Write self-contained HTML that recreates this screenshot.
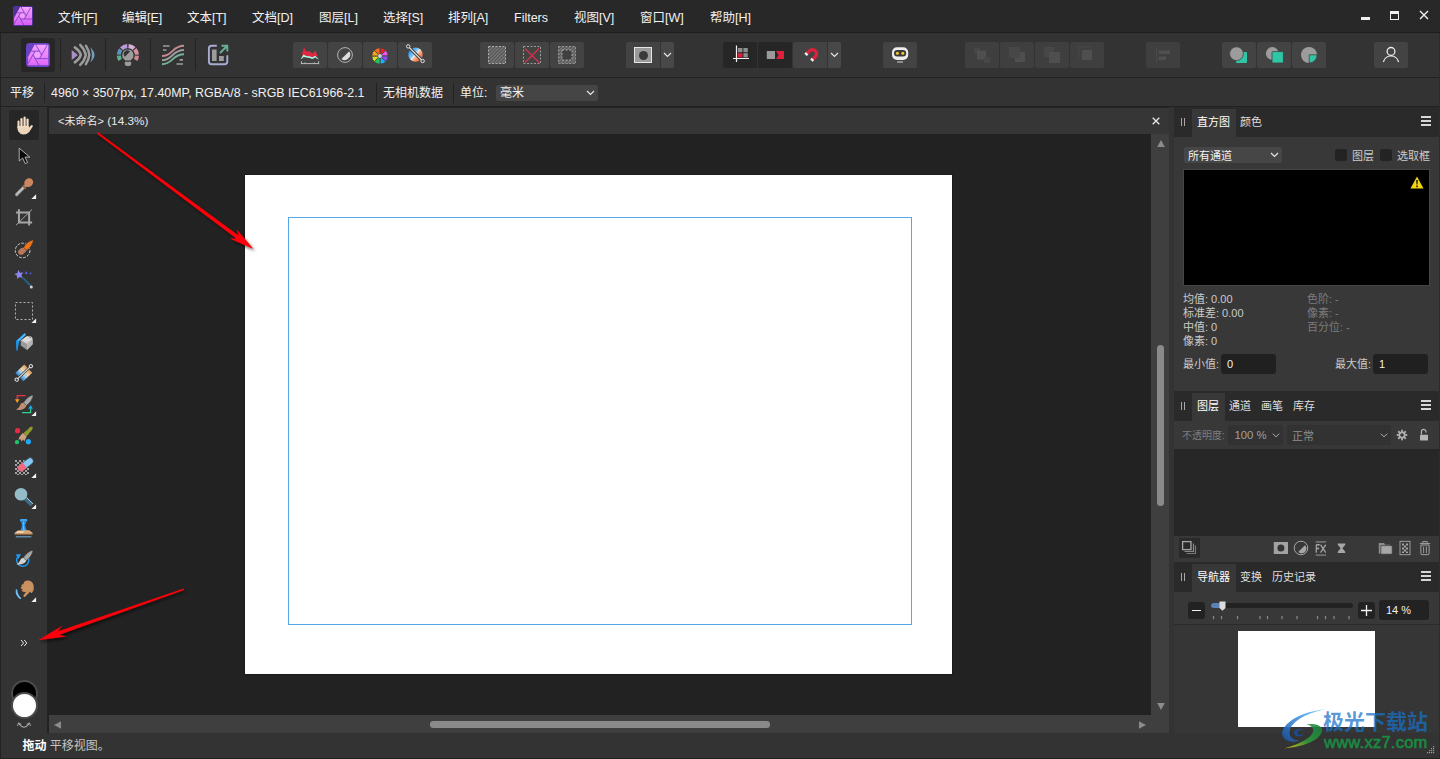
<!DOCTYPE html>
<html lang="zh-CN">
<head>
<meta charset="utf-8">
<title>Affinity Photo</title>
<style>
*{box-sizing:border-box;margin:0;padding:0}
html,body{width:1440px;height:759px;overflow:hidden;background:#222;}
body{position:relative;font-family:"Liberation Sans","Noto Sans CJK SC",sans-serif;font-size:12px;color:#e6e6e6;-webkit-font-smoothing:antialiased}
.abs{position:absolute}
#menubar{left:0;top:0;width:1440px;height:33px;background:#282828}
#menubar .mi{position:absolute;top:9px;height:18px;line-height:18px;font-size:12.5px;color:#f2f2f2;white-space:nowrap}
#toolbar{left:1px;top:33px;width:1439px;height:44px;background:#333}
.tb{position:absolute;top:9px;width:34px;height:26px;background:#434343;border-radius:2px}
.tb.dark{background:#262626}
.tb.dis{background:#3f3f3f}
.tb svg{position:absolute;left:0;top:0}
.vsep{position:absolute;width:1px;background:#222}
#ctxbar{left:1px;top:78px;width:1439px;height:28px;background:#333}
#ctxbar .t{position:absolute;top:6px;height:18px;line-height:18px;font-size:12px;color:#f0f0f0;white-space:nowrap}
#tools{left:1px;top:107px;width:46px;height:626px;background:#333}
#tools svg{position:absolute}
#doctab{left:49px;top:108px;width:1120px;height:26px;background:#363636}
#canvas{left:49px;top:134px;width:1102px;height:581px;background:#222}
#vscroll{left:1151px;top:134px;width:18px;height:581px;background:#3f3f3f}
#hscroll{left:49px;top:715px;width:1102px;height:18px;background:#3f3f3f}
#corner{left:1151px;top:715px;width:18px;height:18px;background:#3f3f3f}
#status{left:1px;top:733px;width:1439px;height:25px;background:#333}
#right{left:1174px;top:107px;width:266px;height:626px;background:#333}
#gap{left:1169px;top:107px;width:5px;height:626px;background:#333}
.ptabs{position:absolute;left:0;width:266px;height:28px;background:#2a2a2a}
.ptab{position:absolute;top:0;height:28px;line-height:26px;font-size:11px;color:#dedede;white-space:nowrap}
.hamb{width:10px;height:10px;border-top:2px solid #d6d6d6;border-bottom:2px solid #d6d6d6}
.hamb:after{content:"";position:absolute;left:0;top:2px;width:10px;height:2px;background:#d6d6d6}
.ptab.on{background:#383838;color:#fff}
.pbody{position:absolute;left:0;width:266px;background:#383838}
.lbl{position:absolute;font-size:11px;white-space:nowrap;line-height:14px;color:#cacaca}
.dim{color:#7c7c7c}
</style>
</head>
<body>
<!-- MENU BAR -->
<div id="menubar" class="abs">
  <svg class="abs" style="left:13px;top:6px" width="20" height="20" viewBox="0 0 20 20">
    <defs><linearGradient id="lg1" x1="0" y1="0" x2="0" y2="1"><stop offset="0" stop-color="#f5a6ff"/><stop offset="1" stop-color="#d65df5"/></linearGradient></defs>
    <rect width="20" height="20" rx="2" fill="#53309a"/>
    <g transform="scale(0.8333)">
    <path d="M8.6 1.200H22.800V22.800H1.200V14.300Z" fill="url(#lg1)"/>
    <circle cx="11.3" cy="11.9" r="2.900" fill="#f8b8ff" opacity="0.550"/>
    <path d="M9.800 1.200 15.630 11.900M21.460 1.800 13.470 15.650M22.800 15.650H9.130M12.970 22.800 6.970 11.900M1.400 21.500 9.130 8.150M5.200 8.150H13.470" stroke="#7a3cc0" stroke-width="0.950" fill="none"/>
    </g>
  </svg>
  <span class="mi" style="left:58px">文件[F]</span>
  <span class="mi" style="left:122px">编辑[E]</span>
  <span class="mi" style="left:187px">文本[T]</span>
  <span class="mi" style="left:252px">文档[D]</span>
  <span class="mi" style="left:319px">图层[L]</span>
  <span class="mi" style="left:383px">选择[S]</span>
  <span class="mi" style="left:448px">排列[A]</span>
  <span class="mi" style="left:514px">Filters</span>
  <span class="mi" style="left:574px">视图[V]</span>
  <span class="mi" style="left:640px">窗口[W]</span>
  <span class="mi" style="left:710px">帮助[H]</span>
  <div class="abs" style="left:1361px;top:16.600px;width:9px;height:3.200px;background:#f0f0f0"></div>
  <div class="abs" style="left:1390px;top:11px;width:9px;height:9px;border:1px solid #f0f0f0;border-top-width:3px"></div>
  <svg class="abs" style="left:1419px;top:10px" width="10" height="10" viewBox="0 0 10 10"><path d="M1 1 9 9M9 1 1 9" stroke="#f0f0f0" stroke-width="1.4"/></svg>
</div>
<div class="abs" style="left:0;top:32px;width:1440px;height:1px;background:#1d1d1d"></div>

<!-- TOOLBAR -->
<div id="toolbar" class="abs">
  <!-- persona buttons (coords relative to toolbar: left=1, top=33) -->
  <div class="abs" style="left:20px;top:5px;width:34px;height:34px;background:#262626;border-radius:3px"></div>
  <svg class="abs" style="left:25px;top:10px" width="24" height="24" viewBox="0 0 24 24">
    <defs><linearGradient id="lg2" x1="0" y1="0" x2="0" y2="1"><stop offset="0" stop-color="#f6a4ff"/><stop offset="1" stop-color="#e066f7"/></linearGradient></defs>
    <rect width="24" height="24" rx="3.5" fill="#6a42c4"/>
    <path d="M8.6 1.8H22.3V22.3H1.9V14.3Z" fill="url(#lg2)"/>
    <circle cx="11.3" cy="11.9" r="2.9" fill="#f8b8ff" opacity="0.55"/>
    <path d="M9.8 1.8 15.63 11.9M21.46 1.8 13.47 15.65M22.3 15.65H9.13M12.97 22.3 6.97 11.9M1.9 20.68 9.13 8.15M5.2 8.15H13.47" stroke="#7440c8" stroke-width="0.85" fill="none"/>
  </svg>
  <div class="vsep" style="left:59px;top:5px;height:33px"></div>
  <svg class="abs" style="left:69px;top:9px" width="26" height="26" viewBox="0 0 26 26">
    <path d="M1.7 8.1 7.9 12.9 1.7 18.1Z" fill="#a98fc6"/>
    <path d="M4.8 5.4Q9.6 8.6 10.9 12.9Q9.6 17.2 4.8 20.4M10.2 2.9Q14.8 7.6 15.8 12.9Q14.8 18.2 10.2 22.9M15.9 3.7Q18.9 8.4 19.3 12.9Q18.9 17.4 15.9 22.1" stroke="#9c9c9c" stroke-width="2.5" fill="none" stroke-linecap="round" stroke-linejoin="round"/>
    <path d="M20.3 5.2Q24.6 9.5 24.5 12.9Q24.6 16.3 20.3 20.6Q22 16.3 21.9 12.9Q22 9.5 20.3 5.200Z" fill="#6fa0bd"/>
  </svg>
  <div class="vsep" style="left:104px;top:5px;height:33px"></div>
  <svg class="abs" style="left:114px;top:9px" width="26" height="26" viewBox="0 0 26 26">
    <g fill="none" stroke-width="4.2">
      <path d="M5.27 17.87A9 9 0 0 1 3.91 13.57" stroke="#5fae8c"/>
      <path d="M3.91 12.63A9 9 0 0 1 5.81 7.56" stroke="#5b93b6"/>
      <path d="M6.54 6.74A9 9 0 0 1 12.27 4.12" stroke="#b79ad6"/>
      <path d="M13.53 4.12A9 9 0 0 1 19.04 6.52" stroke="#d9addb"/>
      <path d="M19.79 7.31A9 9 0 0 1 21.89 12.63" stroke="#d292a0"/>
      <path d="M21.89 13.57A9 9 0 0 1 20.53 17.87" stroke="#d08890"/>
    </g>
    <circle cx="12.9" cy="13.2" r="6.8" fill="#333"/>
    <path d="M12.9 7.6A5.6 5.6 0 0 1 15.8 18V18.400H10V18A5.6 5.6 0 0 1 12.9 7.600Z" fill="#9c9c9c"/>
    <path d="M9.9 14.7 15 9.500A3.6 3.6 0 0 0 9.9 14.700Z" fill="#333"/>
    <path d="M9.8 19.7H16.2V22Q16.2 24 14.200 24H11.800Q9.800 24 9.800 22Z" fill="#9c9c9c"/>
  </svg>
  <div class="vsep" style="left:149px;top:5px;height:33px"></div>
  <svg class="abs" style="left:160px;top:10px" width="24" height="24" viewBox="0 0 24 24">
    <g stroke="#9c9c9c" stroke-width="1.7" fill="none">
      <path d="M2 3H8.6M2 7H5.5M18.5 16.8H22M15.5 21H22"/>
      <path d="M1 17.2C12 17.2 11 7 23 7" stroke-width="1.9"/>
    </g>
    <path d="M1 13C12 13 11 2.8 23 2.8" stroke="#c58a92" stroke-width="1.900" fill="none"/>
    <path d="M1 21.3C12 21.3 11 11.2 23 11.2" stroke="#76b297" stroke-width="1.900" fill="none"/>
  </svg>
  <div class="vsep" style="left:194px;top:5px;height:33px"></div>
  <svg class="abs" style="left:205px;top:10px" width="24" height="24" viewBox="0 0 24 24">
    <path d="M10.800 2.800H5.600Q2.900 2.800 2.900 5.500V18.600Q2.900 21.300 5.600 21.300H18.600Q21.300 21.300 21.300 18.600V12.300" stroke="#a8acd2" stroke-width="1.9" fill="none"/>
    <rect x="6" y="6.5" width="4.6" height="11.5" fill="#9c9c9c"/>
    <rect x="13" y="13" width="4.8" height="5" fill="#9c9c9c"/>
    <path d="M14 10 21 3M15.5 2.8H21.3V8.6" stroke="#6aae98" stroke-width="1.900" fill="none"/>
  </svg>

  <!-- group 2 -->
  <div class="tb" style="left:292px"></div>
  <div class="tb" style="left:327px"></div>
  <div class="tb" style="left:362px"></div>
  <div class="tb" style="left:397px"></div>
  <svg class="abs" style="left:299px;top:13px" width="20" height="19" viewBox="0 0 20 19">
    <path d="M1.800 10 2.500 6.300 4.150 1.100 5.800 4.900 8.200 5.800 9.600 5.100 12.400 7.700 14.300 5.800 15.500 4.600 17.100 9.100 18.100 10.800 15.200 9.800 12.400 11.200 9.600 10.300 6.300 10 3.400 8.600Z" fill="#e0283f"/>
    <path d="M1.100 12.600 3.400 8.600 6.300 10 9.600 10.300 12.400 11.200 15.200 9.800 18.550 12.900V13.400L15.200 11.600 12.400 13 9.600 12 3.700 11.100 1.100 13.300Z" fill="#b8f2e0"/>
    <path d="M1.100 17.600H19" stroke="#d4d4d4" stroke-width="0.800"/>
    <path d="M1.450 15.200V17.900M18.650 15.200V17.900" stroke="#d4d4d4" stroke-width="0.800"/>
    <path d="M5.100 16.300V17.600M14.300 16.300V17.600" stroke="#d4d4d4" stroke-width="0.700"/>
  </svg>
  <svg class="abs" style="left:335px;top:13px" width="18" height="18" viewBox="0 0 18 18">
    <circle cx="9" cy="9" r="7.400" fill="none" stroke="#b4b4b4" stroke-width="1"/>
    <path d="M13.200 5.200A5.600 5.600 0 0 1 5.400 13Z" fill="#dcdcdc"/>
  </svg>
  <svg class="abs" style="left:370px;top:13.500px" width="18" height="18" viewBox="-9 -9 18 18">
    <g stroke="#404040" stroke-width="0.8">
      <path d="M0 0 0-8.2A8.2 8.2 0 0 1 5.8-5.8Z" fill="#e8202a"/>
      <path d="M0 0 5.8-5.8A8.2 8.2 0 0 1 8.2 0Z" fill="#ee55e8"/>
      <path d="M0 0 8.2 0A8.2 8.2 0 0 1 5.8 5.8Z" fill="#8a4cf0"/>
      <path d="M0 0 5.8 5.8A8.2 8.2 0 0 1 0 8.2Z" fill="#20b0f4"/>
      <path d="M0 0 0 8.2A8.2 8.2 0 0 1-5.8 5.8Z" fill="#22c35e"/>
      <path d="M0 0-5.8 5.8A8.2 8.2 0 0 1-8.2 0Z" fill="#d5dd28"/>
      <path d="M0 0-8.2 0A8.2 8.2 0 0 1-5.8-5.8Z" fill="#f7a01c"/>
      <path d="M0 0-5.8-5.8A8.2 8.2 0 0 1 0-8.2Z" fill="#f36b1d"/>
    </g>
    <circle r="2.3" fill="#d6d6d6" stroke="#404040" stroke-width="0.6"/>
  </svg>
  <svg class="abs" style="left:402.500px;top:10.300px" width="22" height="22" viewBox="0 0 22 22">
    <defs><linearGradient id="lg3" x1="0.15" y1="0.2" x2="0.85" y2="0.8"><stop offset="0" stop-color="#1e9af0"/><stop offset="0.42" stop-color="#9ccdf2"/><stop offset="0.5" stop-color="#f4f0ee"/><stop offset="0.6" stop-color="#f3b79b"/><stop offset="1" stop-color="#ee6a28"/></linearGradient></defs>
    <circle cx="11.5" cy="11.6" r="7.2" fill="url(#lg3)"/>
    <path d="M5.2 4.4 18 17.4" stroke="#404040" stroke-width="3.2"/>
    <path d="M5.2 4.4 18 17.4" stroke="#e8e8e8" stroke-width="1.2"/>
    <circle cx="4.2" cy="3.4" r="1.7" fill="#404040" stroke="#e8e8e8" stroke-width="1"/>
    <circle cx="18.6" cy="18" r="1.7" fill="#404040" stroke="#e8e8e8" stroke-width="1"/>
  </svg>

  <!-- group 3 -->
  <div class="tb" style="left:479px"></div>
  <div class="tb" style="left:514px"></div>
  <div class="tb" style="left:549px"></div>
  <svg class="abs" style="left:486px;top:12px" width="20" height="20" viewBox="0 0 20 20">
    <defs><pattern id="hat" width="2.5" height="2.5" patternUnits="userSpaceOnUse" patternTransform="rotate(-45)"><rect width="2.5" height="1.1" fill="#7d7d7d"/></pattern></defs>
    <rect x="1.5" y="1.5" width="17" height="17" fill="#565656"/>
    <rect x="1.5" y="1.5" width="17" height="17" fill="url(#hat)"/>
    <rect x="1.5" y="1.5" width="17" height="17" fill="none" stroke="#d0d0d0" stroke-width="0.700" stroke-dasharray="2 1.500"/>
  </svg>
  <svg class="abs" style="left:521px;top:12px" width="20" height="20" viewBox="0 0 20 20">
    <rect x="1.5" y="1.5" width="17" height="17" fill="none" stroke="#c4c4c4" stroke-width="0.700" stroke-dasharray="2 1.500"/>
    <path d="M3 3.5 17 17.5M17 3.5 3 17.5" stroke="#d6304a" stroke-width="1.3"/>
  </svg>
  <svg class="abs" style="left:556px;top:12px" width="20" height="20" viewBox="0 0 20 20">
    <rect x="1.5" y="1.5" width="17" height="17" fill="#565656"/>
    <rect x="1.5" y="1.5" width="17" height="17" fill="url(#hat)"/>
    <rect x="5" y="5" width="10" height="10" fill="#404040"/>
    <rect x="1.5" y="1.5" width="17" height="17" fill="none" stroke="#b0b0b0" stroke-width="0.700" stroke-dasharray="2 1.500"/>
    <rect x="5" y="5" width="10" height="10" fill="none" stroke="#d0d0d0" stroke-width="0.700" stroke-dasharray="2 1.500"/>
  </svg>

  <!-- group 4 -->
  <div class="tb" style="left:625px;border-radius:2px 0 0 2px"></div>
  <div class="tb" style="left:660px;width:13px;border-radius:0 2px 2px 0;background:#484848"></div>
  <div class="abs" style="left:633px;top:14px;width:18px;height:16px;background:#9a9a9a;border:1.5px solid #e6e6e6"></div>
  <div class="abs" style="left:637.5px;top:17.5px;width:9px;height:9px;border-radius:50%;background:#3a3a3a"></div>
  <svg class="abs" style="left:662px;top:19px" width="9" height="6" viewBox="0 0 9 6"><path d="M1 1 4.5 4.4 8 1" stroke="#e6e6e6" stroke-width="1.2" fill="none"/></svg>

  <!-- group 5 -->
  <div class="tb dark" style="left:722px"></div>
  <div class="tb dark" style="left:757px"></div>
  <div class="tb" style="left:792px;border-radius:2px 0 0 2px"></div>
  <div class="tb" style="left:827px;width:13px;border-radius:0 2px 2px 0;background:#484848"></div>
  <svg class="abs" style="left:730px;top:11px" width="20" height="20" viewBox="0 0 20 20">
    <path d="M5.5 1.5V18M2 14.5H18" stroke="#f0f0f0" stroke-width="1.2"/>
    <rect x="7" y="4" width="4.4" height="4.2" fill="#8e8e8e"/><rect x="12.4" y="4" width="4.4" height="4.2" fill="#8e8e8e"/>
    <rect x="7" y="9.2" width="4.4" height="4.2" fill="#e0203c"/><rect x="12.4" y="9.2" width="4.4" height="4.2" fill="#8e8e8e"/>
  </svg>
  <svg class="abs" style="left:764px;top:16px" width="20" height="12" viewBox="0 0 20 12">
    <rect x="1.8" y="2" width="8.2" height="8" fill="#9a9a9a"/>
    <path d="M11 2H19V10H11L13.6 6Z" fill="#e0203c"/>
  </svg>
  <svg class="abs" style="left:799px;top:11px" width="22" height="22" viewBox="0 0 22 22">
    <g transform="translate(12 10.200) rotate(45)">
      <path d="M-4.100 4.200V-0.600A4.100 4.100 0 0 1 4.100 -0.600V4.200" stroke="#e0203c" stroke-width="3.300" fill="none"/>
      <rect x="-5.750" y="2.700" width="3.300" height="2.300" fill="#eee"/><rect x="2.450" y="2.700" width="3.300" height="2.300" fill="#eee"/>
    </g>
  </svg>
  <svg class="abs" style="left:829px;top:19px" width="9" height="6" viewBox="0 0 9 6"><path d="M1 1 4.5 4.4 8 1" stroke="#e6e6e6" stroke-width="1.2" fill="none"/></svg>

  <!-- group 6 assistant -->
  <div class="tb" style="left:882px"></div>
  <svg class="abs" style="left:889px;top:12px" width="20" height="20" viewBox="0 0 20 20">
    <rect x="2" y="2.2" width="16.2" height="12.8" rx="5" fill="#ececec"/>
    <rect x="4" y="5" width="12.2" height="6.4" rx="3.2" fill="#3a3a3a"/>
    <circle cx="7.4" cy="8.2" r="1.5" fill="#f0c832"/><circle cx="12.8" cy="8.2" r="1.5" fill="#f0c832"/>
    <rect x="7.2" y="16.2" width="5.8" height="1.6" fill="#a0a0a0"/>
  </svg>

  <!-- group 7 disabled -->
  <div class="tb dis" style="left:964px"></div>
  <div class="tb dis" style="left:999px"></div>
  <div class="tb dis" style="left:1034px"></div>
  <div class="tb dis" style="left:1069px"></div>
  <svg class="abs" style="left:964px;top:9px" width="140" height="26" viewBox="0 0 140 26">
    <g fill="#474747">
      <rect x="9" y="5.5" width="6" height="6"/><rect x="12" y="8.5" width="9" height="9" fill="#4f4f4f"/><rect x="19" y="15" width="6" height="6"/>
      <rect x="50" y="10" width="10" height="10" fill="#4f4f4f"/><rect x="44" y="5" width="11" height="11"/>
      <rect x="79" y="5" width="10" height="10"/><rect x="84" y="10" width="11" height="11" fill="#4f4f4f"/>
      <rect x="114" y="5" width="10" height="10" fill="none" stroke="#484848" /><rect x="117" y="8" width="10" height="10" fill="#4f4f4f"/>
    </g>
  </svg>
  <div class="tb dis" style="left:1145px"></div>
  <svg class="abs" style="left:1145px;top:9px" width="34" height="26" viewBox="0 0 34 26"><path d="M10.5 5V21" stroke="#4a4a4a" stroke-width="1"/><rect x="12.5" y="8.5" width="11.5" height="3.6" fill="#4f4f4f"/><rect x="12.5" y="14.5" width="7.5" height="3.6" fill="#4f4f4f"/></svg>

  <!-- group 9 -->
  <div class="tb" style="left:1221px"></div>
  <div class="tb" style="left:1256px"></div>
  <div class="tb" style="left:1291px"></div>
  <svg class="abs" style="left:1221px;top:9px" width="105" height="26" viewBox="0 0 105 26">
    <rect x="14" y="10" width="11" height="11" rx="1" fill="#2fc6a6"/><circle cx="14.500" cy="11.700" r="6.900" fill="#9c9c9c" stroke="#434343" stroke-width="0.800"/>
    <circle cx="50.300" cy="11.500" r="6.400" fill="#9c9c9c"/><rect x="50" y="9.6" width="11.4" height="11.4" rx="1" fill="#2fc6a6" stroke="#404040" stroke-width="0.8"/>
    <circle cx="87" cy="13" r="8" fill="#9c9c9c"/><path d="M87.200 12.800H95A8 8 0 0 1 87.200 21Z" fill="#2fc6a6" stroke="#434343" stroke-width="0.800"/>
  </svg>

  <!-- account -->
  <div class="tb" style="left:1373px"></div>
  <svg class="abs" style="left:1380px;top:12px" width="20" height="20" viewBox="0 0 20 20">
    <circle cx="10" cy="6.4" r="3.9" fill="none" stroke="#ececec" stroke-width="1.3"/>
    <path d="M2.4 17A7.8 7.8 0 0 1 17.6 17" fill="none" stroke="#ececec" stroke-width="1.3"/>
  </svg>
</div>

<!-- CONTEXT BAR -->
<div id="ctxbar" class="abs">
  <span class="t" style="left:9px">平移</span>
  <div class="vsep" style="left:43px;top:5px;height:20px"></div>
  <span class="t" id="docinfo" style="left:50px;font-size:12.4px">4960 × 3507px, 17.40MP, RGBA/8 - sRGB IEC61966-2.1</span>
  <div class="vsep" style="left:375px;top:5px;height:20px"></div>
  <span class="t" style="left:382px">无相机数据</span>
  <div class="vsep" style="left:452px;top:5px;height:20px"></div>
  <span class="t" style="left:459px">单位:</span>
  <div class="abs" style="left:495px;top:7px;width:102px;height:16px;background:#454545;border-radius:2px"></div>
  <span class="t" style="left:499px">毫米</span>
  <svg class="abs" style="left:585px;top:12px" width="9" height="6" viewBox="0 0 9 6"><path d="M1 1 4.5 4.4 8 1" stroke="#e6e6e6" stroke-width="1.2" fill="none"/></svg>
</div>

<!-- LEFT TOOLS -->
<div id="tools" class="abs">
  <!-- coords relative to left=1, top=107 -->
  <div class="abs" style="left:8px;top:3px;width:30px;height:30px;background:#262626;border-radius:3px"></div>
  <!-- hand -->
  <svg style="left:15.500px;top:8.500px" width="17" height="20" viewBox="0 0 17 20">
    <path d="M0.500 10H11.650V11.800L13.900 9.400Q15 8.500 15.700 9.400Q16.100 10.200 15.300 11.300L12 16.200Q9.800 18.600 6.500 18.600Q3 18.400 1.300 15.600Q0.500 14 0.500 12Z" fill="#ecd5bb"/>
    <rect x="0.500" y="4.400" width="2.050" height="8" rx="1" fill="#f4dec6"/>
    <rect x="3.400" y="2.100" width="2.200" height="10" rx="1.100" fill="#f4dec6"/>
    <rect x="6.500" y="0.500" width="2.200" height="11" rx="1.100" fill="#f4dec6"/>
    <rect x="9.450" y="2.500" width="2.200" height="10" rx="1.100" fill="#f4dec6"/>
  </svg>
  <!-- move arrow -->
  <svg style="left:17px;top:40px" width="13" height="18" viewBox="0 0 13 18">
    <path d="M1.200 1.200V14L4.600 11 7.200 16.600 9.600 15.500 7 10.100H11.800Z" fill="#0a0a0a" stroke="#bdbdbd" stroke-width="0.900" stroke-linejoin="round"/>
  </svg>
  <!-- colour picker -->
  <svg style="left:13px;top:70px" width="24" height="24" viewBox="0 0 24 24">
    <path d="M2.600 17.600 10.800 9.400" stroke="#a8a8a8" stroke-width="3" stroke-linecap="round"/>
    <path d="M3 16.600 10.200 9.400" stroke="#d6d6d6" stroke-width="1" stroke-linecap="round"/>
    <path d="M9.300 7.600 12.600 10.900 11.300 12.200 8 8.900Z" fill="#9a5a3a"/>
    <ellipse cx="14.700" cy="5.600" rx="4.700" ry="4.100" transform="rotate(-42 14.700 5.600)" fill="#cd8760"/>
    <path d="M22.100 17.200V22H17.400Z" fill="#f2f2f2"/>
  </svg>
  <!-- crop -->
  <svg style="left:15px;top:102px" width="17" height="17" viewBox="0 0 17 17">
    <path d="M2.950 0.200V13.600H16.100M0 3.450H13.100V16.500" stroke="#a6a6a6" stroke-width="2" fill="none"/>
    <path d="M0 16.200 16.100 0.400" stroke="#a6a6a6" stroke-width="1"/>
  </svg>
  <!-- selection brush -->
  <svg style="left:13px;top:131px" width="22" height="22" viewBox="0 0 22 22">
    <circle cx="8.600" cy="12.500" r="7.300" fill="none" stroke="#dcdcdc" stroke-width="1" stroke-dasharray="2.600 1.500"/>
    <path d="M9.600 9.400Q13 3.600 18.500 2.100Q19.700 2 19.300 3.300Q17.600 9 12.900 12.500Z" fill="#f0741c" stroke="#333" stroke-width="0.600"/>
    <ellipse cx="7.800" cy="13.300" rx="3.900" ry="3" transform="rotate(-38 7.800 13.300)" fill="#b8775a"/>
    <path d="M9.300 9.600 12.700 12.700 11 14 8 11Z" fill="#b8775a"/>
  </svg>
  <!-- magic wand -->
  <svg style="left:13px;top:161px" width="22" height="22" viewBox="0 0 22 22">
    <path d="M8.600 10 17.200 18.800" stroke="#1f5068" stroke-width="2.300" stroke-linecap="round"/>
    <path d="M9.400 9.900 17 17.600" stroke="#4d8aa6" stroke-width="0.600"/>
    <circle cx="17.300" cy="18.900" r="1.500" fill="#d4d4d4"/>
    <path d="M4.27 1.97 6.11 4.63 9.34 4.45 7.38 7.02 8.55 10.03 5.50 8.97 3.00 11.01 3.07 7.78 0.35 6.03 3.45 5.10Z" fill="#8a86f2"/>
    <path d="M12.20 3.10 12.77 4.43 14.10 5.00 12.77 5.57 12.20 6.90 11.63 5.57 10.30 5.00 11.63 4.43Z" fill="#5a6cf0"/>
    <path d="M16.60 4.00 17.02 4.98 18.00 5.40 17.02 5.82 16.60 6.80 16.18 5.82 15.20 5.40 16.18 4.98Z" fill="#5a6cf0"/>
  </svg>
  <!-- marquee -->
  <svg style="left:13px;top:194px" width="24" height="24" viewBox="0 0 24 24">
    <rect x="1.500" y="1.500" width="17" height="17" fill="none" stroke="#b4b4b4" stroke-width="1" stroke-dasharray="2 2"/>
    <path d="M22.100 17.400V22.100H17.400Z" fill="#f2f2f2"/>
  </svg>
  <!-- flood fill -->
  <svg style="left:13px;top:224px" width="22" height="22" viewBox="0 0 22 22">
    <path d="M6.700 9.500 13 13.300 18.700 8.200V13.300L13 19 6.700 14.500Z" fill="#9a9a9a"/>
    <path d="M13 13.300 18.700 8.200V13.300L13 19Z" fill="#b4b4b4"/>
    <path d="M6.700 9.500 13 5 18.700 8.200 13 13.300Z" fill="#d2d2d2"/>
    <ellipse cx="14.300" cy="7.600" rx="3.900" ry="1.600" fill="none" stroke="#ececec" stroke-width="0.900" transform="rotate(-10 14.300 7.600)"/>
    <path d="M10.600 2.200 12 3.800 5.200 10.200 4.800 12.400 3.400 19.800 2.300 19.600 2 9.800Z" fill="#1e95ea"/>
    <path d="M10.600 2.200 12 3.800 5.200 10.200 3.600 9.300Z" fill="#4db4f4"/>
  </svg>
  <!-- gradient -->
  <svg style="left:13px;top:255px" width="22" height="22" viewBox="0 0 22 22">
    <defs><linearGradient id="gg" x1="0" y1="0" x2="1" y2="0"><stop offset="0" stop-color="#2683cc"/><stop offset="1" stop-color="#cfe6f2"/></linearGradient>
    <linearGradient id="gg2" x1="0" y1="0" x2="1" y2="0"><stop offset="0" stop-color="#f2e6c4"/><stop offset="1" stop-color="#d89c62"/></linearGradient></defs>
    <g transform="translate(9.800 10.900) rotate(-43.500)">
      <rect x="-6.200" y="-5.800" width="6.200" height="4.600" fill="url(#gg)"/><rect x="0" y="-5.800" width="6.200" height="4.600" fill="url(#gg2)"/>
      <rect x="-6.200" y="1.200" width="6.200" height="4.600" fill="url(#gg)"/><rect x="0" y="1.200" width="6.200" height="4.600" fill="url(#gg2)"/>
      <path d="M-8.700 0H8.700" stroke="#e4e4e4" stroke-width="1.100"/>
      <circle cx="-9.800" cy="0" r="1.600" fill="#333" stroke="#e4e4e4" stroke-width="1"/>
      <circle cx="9.800" cy="0" r="1.600" fill="#333" stroke="#e4e4e4" stroke-width="1"/>
    </g>
  </svg>
  <!-- paint brush with arrows -->
  <svg style="left:13px;top:286px" width="24" height="25" viewBox="0 0 24 25">
    <path d="M11.500 2.600H3.200V7" stroke="#e5324d" stroke-width="1.300" fill="none"/>
    <path d="M0.900 6.200 3.200 10 5.500 6.200Z" fill="#f0a01e"/>
    <path d="M8 19.700H16.600V15.500" stroke="#2fd08c" stroke-width="1.300" fill="none"/>
    <path d="M14.200 15.800 16.600 12 19 15.800Z" fill="#1fa6f0"/>
    <path d="M9.500 9.600Q13.500 3.400 17.900 2.200Q19.300 2 19 3.500Q17.700 8.800 12.400 12.600Z" fill="#a6a6a6" stroke="#333" stroke-width="0.500"/>
    <path d="M9.300 9.600 12.400 12.600Q11.200 16.600 6.200 16.900Q2.600 17.100 2.200 16.200Q5 15.400 5.600 13Q6.500 10 9.300 9.600Z" fill="#c08e70"/>
    <path d="M22.100 18.600V23.100H17.400Z" fill="#f2f2f2"/>
  </svg>
  <!-- colour replacement brush -->
  <svg style="left:13px;top:318px" width="22" height="22" viewBox="0 0 22 22">
    <circle cx="3.600" cy="5.700" r="2.600" fill="#e82a44"/>
    <circle cx="3" cy="17.100" r="2.200" fill="#20c46a"/>
    <circle cx="14.400" cy="16.700" r="2.600" fill="#20a8f4"/>
    <path d="M9.200 8.400Q11.600 5.600 13.400 5Q14.800 2.200 17.400 1.500Q19.200 1.600 18.700 3.600Q17.800 6 15.700 7.200Q14.800 9.600 12.300 11.400Z" fill="#8c9a30"/>
    <path d="M8.800 8 12.600 11.600 10.400 16.200 9 14.400 7.800 16.600 6.400 14.200 4.400 14.800 5.600 11.600Z" fill="#cda080"/>
  </svg>
  <!-- erase -->
  <svg style="left:13px;top:348px" width="24" height="24" viewBox="0 0 24 24">
    <defs><pattern id="chk" width="4" height="4" patternUnits="userSpaceOnUse" x="1" y="5"><rect width="4" height="4" fill="#333"/><rect width="2" height="2" fill="#a4a4a4"/><rect x="2" y="2" width="2" height="2" fill="#a4a4a4"/></pattern></defs>
    <rect x="1" y="5" width="14" height="15" fill="url(#chk)"/>
    <g transform="rotate(-38 11.500 9.500)">
      <rect x="2.500" y="6.300" width="18" height="6.600" rx="3.300" fill="#86c8f4" stroke="#333" stroke-width="0.600"/>
      <path d="M5.800 6.300H10.600V12.900H5.800A3.300 3.300 0 0 1 5.800 6.300Z" fill="#ee6a80"/>
    </g>
    <path d="M22.100 18.300V23.100H17.400Z" fill="#f2f2f2"/>
  </svg>
  <!-- zoom/dodge -->
  <svg style="left:12px;top:379px" width="24" height="24" viewBox="0 0 24 24">
    <path d="M12 12 19 19" stroke="#3f6c88" stroke-width="4.200" stroke-linecap="butt"/>
    <path d="M13.600 11.600 20 18" stroke="#a8c0cc" stroke-width="1"/>
    <circle cx="8" cy="8.200" r="6.300" fill="#94bcc6"/>
    <path d="M23.100 18.600V23H18.400Z" fill="#f2f2f2"/>
  </svg>
  <!-- clone stamp -->
  <svg style="left:12px;top:411px" width="22" height="22" viewBox="0 0 22 22">
    <path d="M7 1.800Q7 1 7.800 1H13.400Q14.200 1 14.200 1.800V3.400H7Z" fill="#3aa8f2"/>
    <path d="M8 3.400H13.200L12.200 7.500 13.600 12.400H7.600L9 7.500Z" fill="#2a90e6"/>
    <path d="M10 3.400H11.400L10.800 7.500 11.600 12.400H10Z" fill="#5cc0f8"/>
    <path d="M5 12.400H16.200L19.600 15H1.600Z" fill="#ecd0aa"/>
    <path d="M10.600 12.400H16.200L19.600 15H10.600Z" fill="#d6a878"/>
    <rect x="1.600" y="15" width="18" height="1.500" fill="#c8965e"/>
    <rect x="2.800" y="18" width="15.600" height="1.500" fill="#5e8aa6"/>
  </svg>
  <!-- undo brush -->
  <svg style="left:13px;top:441px" width="22" height="24" viewBox="0 0 22 24">
    <path d="M3.800 8.600A6.100 6.100 0 1 0 13.400 8.200" fill="none" stroke="#1e9af0" stroke-width="1.400"/>
    <path d="M1.600 6.400 7 6 4.600 11Z" fill="#1e9af0"/>
    <path d="M9.300 9.600Q13.400 3.600 17.800 2.400Q19.200 2.300 18.800 3.800Q17.400 8.800 12.300 12.700Z" fill="#a6a6a6" stroke="#333" stroke-width="0.500"/>
    <path d="M9.100 9.700 12.300 12.700Q11 15.600 7 16.200Q3.600 16.800 2.600 16.300Q5.200 15 5.800 13Q6.800 10.200 9.100 9.700Z" fill="#d4d4d4"/>
  </svg>
  <!-- smudge -->
  <svg style="left:13px;top:472px" width="24" height="24" viewBox="0 0 24 24">
    <path d="M1.800 10.200Q0.800 17.200 6.800 20.200Q7.600 19.600 7 18.800Q3.600 16 3.200 10.400Z" fill="#6fc0f4"/>
    <path d="M12.500 1.600Q18.500 1.200 19.800 7Q20.300 11 18.200 13.600Q17.400 14.600 16.800 13.600L16.200 12.600Q14 15 11.500 17.600Q10.400 18.400 9.600 17.400Q9 16.500 10 15.500L12 13.200 8.400 12.400Q7.400 12 7.800 11T9.200 10.200L7.400 9.800Q6.400 9.400 6.800 8.400T8.300 7.800L7.800 7.400Q7 6.600 7.600 5.800T9.200 5.400Q9.600 2.400 12.500 1.600Z" fill="#c7925f"/>
    <path d="M22.100 18.200V23H17.400Z" fill="#f2f2f2"/>
  </svg>
  <!-- chevrons -->
  <svg style="left:19px;top:532px" width="8" height="8" viewBox="0 0 8 8"><path d="M1 1 3.600 4 1 7M4.200 1 6.800 4 4.200 7" stroke="#e8e8e8" stroke-width="1" fill="none"/></svg>
  <!-- colour wells -->
  <div class="abs" style="left:9.600px;top:573.300px;width:27.200px;height:27.200px;border-radius:50%;background:#000;border:2px solid #4c4c4c"></div>
  <div class="abs" style="left:9.600px;top:584.600px;width:27.200px;height:27.200px;border-radius:50%;background:#fff;border:2px solid #4c4c4c"></div>
  <svg style="left:15.600px;top:614.500px" width="14" height="8" viewBox="0 0 14 8"><path d="M2 2Q7 8.500 12 2" stroke="#b0b0b0" stroke-width="1.100" fill="none"/><path d="M0.500 3.800 1.600 0.800 4.400 2.500M13.500 3.800 12.400 0.800 9.600 2.500" stroke="#b0b0b0" stroke-width="1" fill="none"/></svg>
</div>

<!-- DOC TAB -->
<div id="doctab" class="abs">
  <span class="abs" id="tabtitle" style="left:9px;top:5px;line-height:16px;font-size:11px;color:#e8e8e8;white-space:nowrap">&lt;未命名&gt;<span style="font-size:11.800px"> (14.3%)</span></span>
  <svg class="abs" style="left:1102.600px;top:9px" width="8" height="8" viewBox="0 0 8 8"><path d="M0.700 0.700 7.300 7.300M7.300 0.700 0.700 7.300" stroke="#e8e8e8" stroke-width="1.300"/></svg>
</div>

<!-- CANVAS -->
<div id="canvas" class="abs">
  <div class="abs" style="left:196px;top:41px;width:707px;height:499px;background:#fff;box-shadow:0 0 0 1px #1a1a1a"></div>
  <div class="abs" style="left:238.800px;top:82.600px;width:623.900px;height:408.300px;border:1px solid #56a6e8"></div>
</div>
<div id="vscroll" class="abs">
  <svg class="abs" style="left:5.700px;top:6px" width="8" height="7" viewBox="0 0 8 7"><path d="M4 0 7.800 7H0.200Z" fill="#8c8c8c"/></svg>
  <div class="abs" style="left:6px;top:211px;width:7px;height:161px;border-radius:3.500px;background:#8a8a8a"></div>
  <svg class="abs" style="left:5.500px;top:569px" width="8" height="7" viewBox="0 0 8 7"><path d="M4 7 7.800 0H0.200Z" fill="#8c8c8c"/></svg>
</div>
<div id="hscroll" class="abs">
  <svg class="abs" style="left:5px;top:5.600px" width="7" height="8" viewBox="0 0 7 8"><path d="M0 4 7 0.200V7.800Z" fill="#8c8c8c"/></svg>
  <div class="abs" style="left:381px;top:6.300px;width:339.500px;height:6.400px;border-radius:3.200px;background:#8a8a8a"></div>
  <svg class="abs" style="left:1090px;top:5.600px" width="7" height="8" viewBox="0 0 7 8"><path d="M7 4 0 0.200V7.800Z" fill="#8c8c8c"/></svg>
</div>
<div id="corner" class="abs"></div>
<div id="gap" class="abs"></div>
<div class="abs" style="left:1439px;top:33px;width:1px;height:725px;background:#2c2c2c;z-index:3"></div>

<!-- RIGHT PANELS -->
<div id="right" class="abs">
  <!-- coords relative to left=1174, top=107 -->
  <!-- ===== Histogram panel ===== -->
  <div class="ptabs" style="top:0;height:30px">
    <div class="abs" style="left:7px;top:11px;width:1px;height:8px;background:#a8a8a8"></div>
    <div class="abs" style="left:10px;top:11px;width:1px;height:8px;background:#a8a8a8"></div>
    <div class="ptab on" style="left:18px;top:2px;width:44px;padding-left:5px">直方图</div>
    <div class="ptab" style="left:66px;top:2px">颜色</div>
    <div class="abs hamb" style="left:247px;top:9px"></div>
  </div>
  <div class="pbody" style="top:30px;height:254px">
    <div class="abs" style="left:10px;top:10px;width:98px;height:16px;background:#464646;border-radius:2px"></div>
    <span class="lbl" style="left:14px;top:12px;color:#f2f2f2;font-size:11px">所有通道</span>
    <svg class="abs" style="left:96px;top:15px" width="9" height="6" viewBox="0 0 9 6"><path d="M1 1 4.500 4.400 8 1" stroke="#e6e6e6" stroke-width="1.200" fill="none"/></svg>
    <div class="abs" style="left:161px;top:12px;width:12px;height:12px;background:#232323;border-radius:2.500px"></div>
    <span class="lbl" style="left:178px;top:12px;font-size:11px">图层</span>
    <div class="abs" style="left:206px;top:12px;width:12px;height:12px;background:#232323;border-radius:2.500px"></div>
    <span class="lbl" style="left:223px;top:12px;font-size:11px">选取框</span>
    <div class="abs" style="left:9px;top:32px;width:247px;height:117px;background:#000;border:1px solid #454545"></div>
    <svg class="abs" style="left:236px;top:39px" width="14" height="13" viewBox="0 0 14 13"><path d="M7 0.500 13.500 12.500H0.500Z" fill="#f2d414"/><path d="M6.200 4H7.800L7.500 8.600H6.500ZM6.300 9.600H7.700V11.200H6.300Z" fill="#111"/></svg>
    <span class="lbl" style="left:9px;top:155px">均值: 0.00</span>
    <span class="lbl" style="left:9px;top:169px">标准差: 0.00</span>
    <span class="lbl" style="left:9px;top:183px">中值: 0</span>
    <span class="lbl" style="left:9px;top:197px">像素: 0</span>
    <span class="lbl dim" style="left:133px;top:155px">色阶: -</span>
    <span class="lbl dim" style="left:133px;top:169px">像素: -</span>
    <span class="lbl dim" style="left:133px;top:183px">百分位: -</span>
    <span class="lbl" style="left:9px;top:220px">最小值:</span>
    <div class="abs" style="left:47px;top:217px;width:55px;height:20px;background:#202020;border-radius:3px"></div>
    <span class="lbl" style="left:53px;top:220px;color:#f2f2f2">0</span>
    <span class="lbl" style="left:161px;top:220px">最大值:</span>
    <div class="abs" style="left:199px;top:217px;width:55px;height:20px;background:#202020;border-radius:3px"></div>
    <span class="lbl" style="left:205px;top:220px;color:#f2f2f2">1</span>
  </div>
  <!-- ===== Layers panel ===== -->
  <div class="ptabs" style="top:284px;height:30px">
    <div class="abs" style="left:7px;top:11px;width:1px;height:8px;background:#a8a8a8"></div>
    <div class="abs" style="left:10px;top:11px;width:1px;height:8px;background:#a8a8a8"></div>
    <div class="ptab on" style="left:18px;top:2px;width:33px;padding-left:5px">图层</div>
    <div class="ptab" style="left:55px;top:2px">通道</div>
    <div class="ptab" style="left:87px;top:2px">画笔</div>
    <div class="ptab" style="left:119px;top:2px">库存</div>
    <div class="abs hamb" style="left:247px;top:9px"></div>
  </div>
  <div class="pbody" style="top:314px;height:28px">
    <span class="lbl" style="left:8px;top:8px;font-size:10px;color:#7e7e7e">不透明度:</span>
    <div class="abs" style="left:54px;top:4.300px;width:55px;height:19.500px;background:#323232;border-radius:3px"></div>
    <span class="lbl" style="left:60.500px;top:7px;color:#a0a0a0;font-size:11.300px">100 %</span>
    <svg class="abs" style="left:98px;top:11.500px" width="8" height="5" viewBox="0 0 8 5"><path d="M0.800 0.600 4 3.900 7.200 0.600" stroke="#b0b0b0" stroke-width="1" fill="none"/></svg>
    <div class="abs" style="left:113px;top:4.300px;width:104px;height:19.500px;background:#323232;border-radius:3px"></div>
    <span class="lbl" style="left:118px;top:7.500px;color:#8e8e8e">正常</span>
    <svg class="abs" style="left:205.500px;top:11.500px" width="8" height="5" viewBox="0 0 8 5"><path d="M0.800 0.600 4 3.900 7.200 0.600" stroke="#b0b0b0" stroke-width="1" fill="none"/></svg>
    <svg class="abs" style="left:222px;top:8px" width="12" height="12" viewBox="-6 -6 12 12">
      <g fill="#b0b0b0"><circle r="3.500"/>
      <rect x="-0.900" y="-5.300" width="1.800" height="10.600"/><rect x="-0.900" y="-5.300" width="1.800" height="10.600" transform="rotate(45)"/><rect x="-0.900" y="-5.300" width="1.800" height="10.600" transform="rotate(90)"/><rect x="-0.900" y="-5.300" width="1.800" height="10.600" transform="rotate(135)"/></g>
      <circle r="1.800" fill="#383838"/>
    </svg>
    <svg class="abs" style="left:245px;top:6.500px" width="10" height="14" viewBox="0 0 10 14"><path d="M2.400 6.500V3.700A2.300 2.300 0 0 1 7 3.700V4.400" stroke="#b4b4b4" stroke-width="1.200" fill="none"/><rect x="1" y="6.700" width="8" height="5.800" rx="0.600" fill="#b4b4b4"/></svg>
  </div>
  <div class="abs" style="left:0;top:342px;width:266px;height:87px;background:#272727"></div>
  <div class="pbody" style="top:429px;height:26px">
    <div class="abs" style="left:5px;top:2px;width:21px;height:20px;background:#2a2a2a"></div>
    <svg class="abs" style="left:7px;top:4px" width="17" height="17" viewBox="0 0 17 17">
      <path d="M5.500 13.500H14.500V5.500" stroke="#777" stroke-width="1.200" fill="none"/>
      <path d="M3.500 11.500H12.500V3.500" stroke="#8a8a8a" stroke-width="1.200" fill="none"/>
      <rect x="1.600" y="1.600" width="8.400" height="8" fill="none" stroke="#a6a6a6" stroke-width="1.300"/>
    </svg>
    <svg class="abs" style="left:99px;top:5px" width="16" height="14" viewBox="0 0 16 14"><rect x="0.800" y="1" width="14.200" height="12" fill="#a2a2a2"/><circle cx="7.900" cy="7" r="3.500" fill="#333"/></svg>
    <svg class="abs" style="left:119px;top:4px" width="16" height="16" viewBox="0 0 16 16"><circle cx="8" cy="8" r="6.800" fill="none" stroke="#a6a6a6" stroke-width="1"/><path d="M12 5.200A4.800 4.800 0 0 1 5.200 12Z" fill="#a6a6a6"/></svg>
    <svg class="abs" style="left:141px;top:4.500px" width="12" height="15" viewBox="0 0 14 16" preserveAspectRatio="none"><path d="M0.800 1H13M0.800 15H13" stroke="#a6a6a6" stroke-width="1"/><path d="M1.500 4V12.500M1.500 4H5.500M1.500 8H4.800" stroke="#a6a6a6" stroke-width="1.400" fill="none"/><path d="M6.500 4 12.500 12.500M12.500 4 6.500 12.500" stroke="#a6a6a6" stroke-width="1.400"/></svg>
    <svg class="abs" style="left:162.500px;top:6.800px" width="9" height="10.500" viewBox="0 0 12 14" preserveAspectRatio="none"><path d="M1 0.800H11V2.400L7.200 7 11 11.600V13.200H1V11.600L4.800 7 1 2.400Z" fill="#a6a6a6"/></svg>
    <svg class="abs" style="left:204px;top:5px" width="15" height="14" viewBox="0 0 15 14"><path d="M0.800 2H6L7.200 3.800H12V12.600H0.800Z" fill="#8e8e8e"/><path d="M2.800 4.600H14.200V13.200H2.800Z" fill="#a6a6a6" stroke="#383838" stroke-width="0.700"/></svg>
    <svg class="abs" style="left:225px;top:4px" width="12" height="16" viewBox="0 0 12 16"><rect x="1" y="1.300" width="10" height="13.400" fill="none" stroke="#a6a6a6" stroke-width="0.900"/><path d="M3 3.500H5V5.500H3ZM5 5.500H7V7.500H5ZM7 3.500H9V5.500H7ZM3 7.500H5V9.500H3ZM7 7.500H9V9.500H7ZM5 9.500H7V11.500H5ZM3 11.500H5V13H3ZM7 11.500H9V13H7Z" fill="#a6a6a6"/></svg>
    <svg class="abs" style="left:245px;top:4px" width="12" height="16" viewBox="0 0 12 16"><path d="M0.800 3.600H11.200M3.800 3.400V1.600H8.200V3.400" stroke="#a2a2a2" stroke-width="1" fill="none"/><path d="M1.900 5H10.100V13.600Q10.100 14.700 9 14.700H3Q1.900 14.700 1.900 13.600Z" fill="none" stroke="#a2a2a2" stroke-width="1"/><path d="M4.600 6.500V13.200M7.400 6.500V13.200" stroke="#a2a2a2" stroke-width="0.900"/></svg>
  </div>
  <!-- ===== Navigator panel ===== -->
  <div class="ptabs" style="top:455px;height:30px">
    <div class="abs" style="left:7px;top:11px;width:1px;height:8px;background:#a8a8a8"></div>
    <div class="abs" style="left:10px;top:11px;width:1px;height:8px;background:#a8a8a8"></div>
    <div class="ptab on" style="left:18px;top:2px;width:44px;padding-left:5px">导航器</div>
    <div class="ptab" style="left:66px;top:2px">变换</div>
    <div class="ptab" style="left:98px;top:2px">历史记录</div>
    <div class="abs hamb" style="left:247px;top:9px"></div>
  </div>
  <div class="pbody" style="top:485px;height:141px;background:#363636">
    <div class="abs" style="left:0;top:0;width:266px;height:33px;background:#383838;border-bottom:1px solid #2b2b2b"></div>
    <div class="abs" style="left:14px;top:10px;width:17px;height:17px;background:#222;border-radius:3px"></div>
    <div class="abs" style="left:18px;top:18px;width:9px;height:1.400px;background:#f0f0f0"></div>
    <div class="abs" style="left:37px;top:11px;width:142px;height:5px;background:#222;border-radius:2.500px"></div>
    <div class="abs" style="left:37px;top:11px;width:10px;height:5px;background:#5a82b6;border-radius:2.500px 0 0 2.500px"></div>
    <svg class="abs" style="left:45.300px;top:9px" width="7" height="10" viewBox="0 0 7 10"><path d="M0.500 0.500H6.500V7L3.500 9.800 0.500 7Z" fill="#dcdcdc"/></svg>
    <svg class="abs" style="left:37px;top:24px" width="142" height="5" viewBox="0 0 142 5"><path d="M2.500 0V3.200M10.500 0V3.200M26.500 0V3.200M49 0V3.200M56.500 0V3.200M71 0V3.200M86 0V3.200M106.500 0V3.200M114.500 0V3.200M123 0V3.200M138 0V3.200" stroke="#8a8a8a" stroke-width="1.200"/></svg>
    <div class="abs" style="left:184px;top:10px;width:17px;height:17px;background:#222;border-radius:3px"></div>
    <svg class="abs" style="left:187px;top:13px" width="11" height="11" viewBox="0 0 11 11"><path d="M0 5.500H11M5.500 0V11" stroke="#f0f0f0" stroke-width="1.300"/></svg>
    <div class="abs" style="left:205px;top:8px;width:50px;height:20px;background:#222;border-radius:3px"></div>
    <span class="lbl" style="left:212px;top:11px;color:#f2f2f2">14 %</span>
    <div class="abs" style="left:64px;top:39px;width:137px;height:96px;background:#fff"></div>
  </div>
</div>

<!-- STATUS -->
<div id="status" class="abs">
  <span class="abs" style="left:21.500px;top:5px;line-height:16px;font-size:12px;white-space:nowrap;color:#c4c4c4"><b style="color:#fff">拖动</b> 平移视图。</span>
</div>
<!-- annotation arrows -->
<svg class="abs" style="left:0;top:0;pointer-events:none" width="1440" height="759" viewBox="0 0 1440 759">
  <defs><filter id="sh" x="-10%" y="-10%" width="130%" height="130%"><feDropShadow dx="1.500" dy="2" stdDeviation="1.600" flood-color="#000" flood-opacity="0.600"/></filter></defs>
  <g fill="#fb0007" filter="url(#sh)">
    <path d="M98.0 132.3 238.6 235.5 236.5 229.1 253.5 249.0 229.6 238.4 236.3 238.6 97.0 133.7Z"/>
    <path d="M184.2 590.1 59.4 634.8 66.3 636.5 38.0 640.3 62.5 625.6 58.1 631.2 183.6 588.5Z"/>
  </g>
</svg>
<!-- watermark -->
<svg class="abs" style="left:1278px;top:704px;pointer-events:none" width="54" height="50" viewBox="1278 704 54 50">
  <defs>
    <linearGradient id="wb" x1="0" y1="1" x2="1" y2="0"><stop offset="0" stop-color="#1a4fa0"/><stop offset="0.550" stop-color="#3a8fe0"/><stop offset="1" stop-color="#7fd0f8"/></linearGradient>
    <linearGradient id="wg" x1="1" y1="0" x2="0" y2="1"><stop offset="0" stop-color="#1a8040"/><stop offset="0.550" stop-color="#2e9a3a"/><stop offset="0.850" stop-color="#b0c020"/><stop offset="1" stop-color="#e0a020"/></linearGradient>
  </defs>
  <g opacity="0.880">
  <path d="M1325.500 709.300Q1300 712 1287 724Q1278.500 733 1284.500 739Q1290 743.500 1299 740.500Q1291 740 1289.500 734Q1288.500 726 1300 718.500Q1310 712.500 1325.500 709.300Z" fill="url(#wb)"/>
  <path d="M1304 729.500Q1298 727.500 1294.500 731Q1292.500 735 1297.500 736.500Q1302 737 1304.500 733.500Q1301.500 735.500 1298.500 734.500Q1296 733 1298 730.800Q1300.500 729 1304 729.500Z" fill="#1a4fa0"/>
  <path d="M1306 724.500Q1316 722.500 1321 727Q1324.500 732 1317 738.500Q1306 746.500 1284 748.500Q1300 744 1308 738Q1314.500 733 1313 728.500Q1311 725 1306 724.500Z" fill="url(#wg)"/>
  </g>
</svg>
<span class="abs" style="left:1323px;top:707.500px;font-size:21px;line-height:28px;font-weight:bold;color:rgba(22,113,200,0.720);white-space:nowrap;letter-spacing:0">极光下载站</span>
<span class="abs" id="wmurl" style="left:1324px;top:732px;font-size:16.500px;line-height:20px;font-weight:normal;letter-spacing:0.250px;-webkit-text-stroke:0.600px #1a8a42;color:#1a8a42;white-space:nowrap">www.xz7.com</span>
<svg class="abs" style="left:1427px;top:746px" width="9" height="9" viewBox="0 0 9 9"><g fill="#9a9a9a"><rect x="6" y="0" width="1.200" height="1.200"/><rect x="4" y="2" width="1.200" height="1.200"/><rect x="6" y="2" width="1.200" height="1.200"/><rect x="2" y="4" width="1.200" height="1.200"/><rect x="4" y="4" width="1.200" height="1.200"/><rect x="6" y="4" width="1.200" height="1.200"/><rect x="0" y="6" width="1.200" height="1.200"/><rect x="2" y="6" width="1.200" height="1.200"/><rect x="4" y="6" width="1.200" height="1.200"/><rect x="6" y="6" width="1.200" height="1.200"/></g></svg>
</body>
</html>
